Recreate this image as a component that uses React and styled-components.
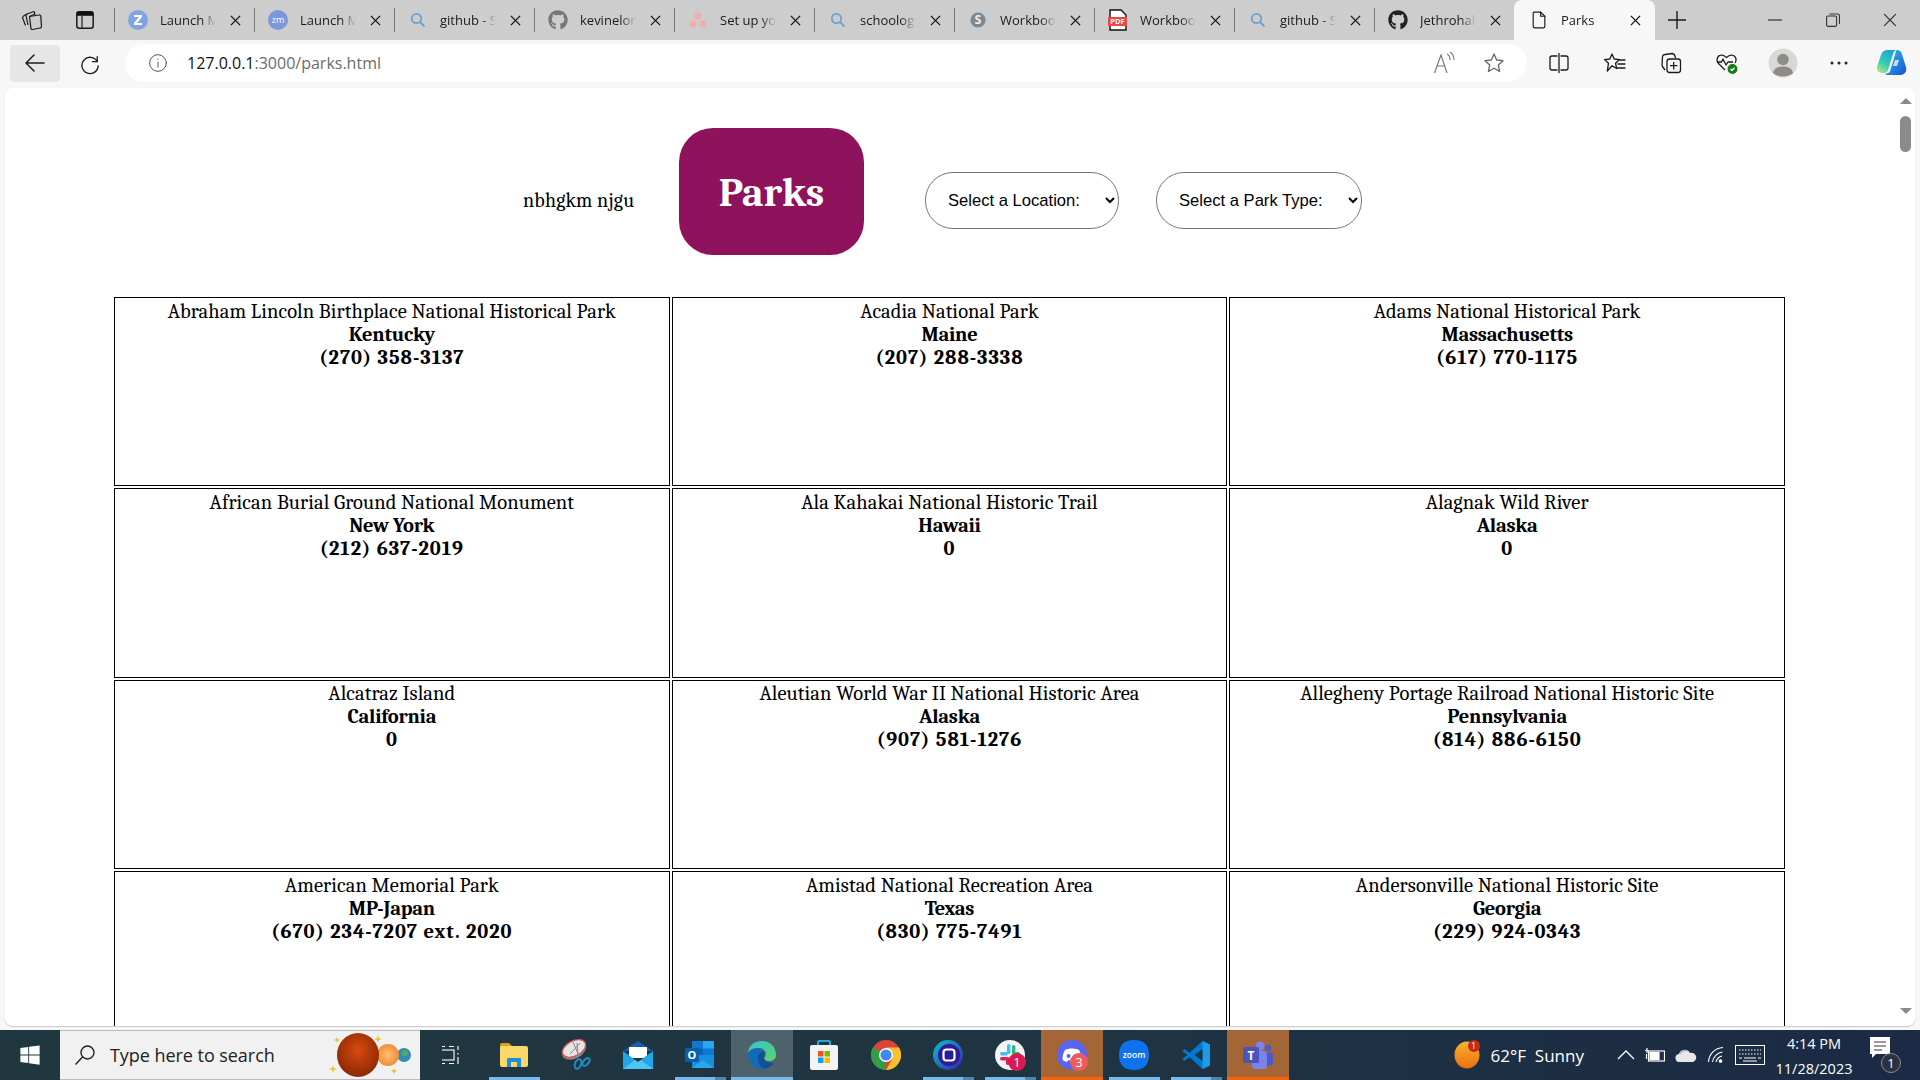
import React from "react";
import styled, { createGlobalStyle } from "styled-components";
import { FaGithub, FaWindows } from "react-icons/fa";

const Global = createGlobalStyle`
  html, body { margin: 0; padding: 0; width: 1920px; height: 1080px; overflow: hidden; background: #f7f7f7; }
  #root { width: 1920px; height: 1080px; }
  * { box-sizing: border-box; }
`;

const Screen = styled.div`
  width: 1920px; height: 1080px; display: flex; flex-direction: column;
  font-family: "Open Sans", "Noto Sans", sans-serif; color: #1b1b1b; overflow: hidden;
`;

/* ---------- tab strip ---------- */
const TabStrip = styled.div`
  height: 40px; flex: none; display: flex; align-items: stretch; background: #cdcdcd;
`;
const StripButton = styled.div`
  width: ${p => p.$w}px; margin-right: ${p => p.$mr || 0}px; flex: none; display: flex; align-items: center; justify-content: center;
`;
const Tab = styled.div`
  width: 140px; flex: none; position: relative; display: flex; align-items: center; padding-left: 13px; font-size: 13px;
  border-left: 1px solid #777; height: 24px; align-self: center;
`;
const ActiveTab = styled.div`
  width: 141px; flex: none; display: flex; align-items: center; padding-left: 15px; font-size: 13px;
  background: #f7f7f7; border-radius: 8px 8px 0 0; height: 40px;
`;
const TabIcon = styled.span`
  width: 20px; height: 20px; flex: none; display: flex; align-items: center; justify-content: center;
`;
const TabTitle = styled.span`
  width: ${p => p.$w || 62}px; margin-left: 12px; overflow: hidden; white-space: nowrap; flex: none;
  -webkit-mask-image: linear-gradient(to right, #000 66%, transparent 90%);
  mask-image: linear-gradient(to right, #000 66%, transparent 90%);
`;
const TabClose = styled.span`
  display: flex; margin-left: 6px; width: 14px; justify-content: center; flex: none;
`;
const WindowControls = styled.div`
  margin-left: auto; display: flex; align-items: center; padding-right: 1px;
`;
const WinBtn = styled.div`
  width: 57.5px; display: flex; justify-content: center; align-items: center;
`;

/* ---------- toolbar ---------- */
const Toolbar = styled.div`
  height: 48px; flex: none; display: flex; align-items: center; padding: 0 0 2px 10px; background: #f7f7f7;
`;
const BackButton = styled.div`
  width: 50px; height: 37px; background: #e6e6e6; border-radius: 4px; display: flex; align-items: center; justify-content: center;
`;
const ReloadButton = styled.div`
  width: 60px; padding-left: 1px; display: flex; align-items: center; justify-content: center;
`;
const AddressBar = styled.div`
  margin-left: 5px; width: 1402px; height: 38px; background: #fff; border-radius: 19px; display: flex; align-items: center; padding-left: 23px; padding-right: 21px;
`;
const UrlText = styled.span`
  margin-left: 19px; font-size: 16px; color: #6b6b6b; white-space: nowrap;
  b { font-weight: 400; color: #111; }
`;
const AddressActions = styled.div`
  margin-left: auto; display: flex; align-items: center; gap: 25px;
`;
const ToolGroup = styled.div`
  display: flex; margin-left: 4px;
`;
const ToolBtn = styled.div`
  width: ${p => p.$w || 56}px; display: flex; align-items: center; justify-content: center;
`;

/* ---------- page ---------- */
const Viewport = styled.div`
  flex: 1; min-height: 0; margin: 0 5px; background: #fff; border-radius: 8px; display: flex; overflow: hidden;
  box-shadow: 0 1px 1px rgba(0,0,0,.18);
`;
const Page = styled.main`
  flex: 1; min-width: 0; overflow: hidden; padding: 40px 0 0 109px;
  font-family: Cambria, "Liberation Serif", serif; color: #000;
`;
const Header = styled.header`
  display: flex; align-items: center; padding-left: 409px; margin-bottom: 25px;
`;
const NameLabel = styled.div`
  width: 111px; font-size: 20px; white-space: nowrap; letter-spacing: .2px;
`;
const Badge = styled.div`
  width: 185px; height: 127px; margin: 0 61px 17px 45px; padding-top: 2px; border-radius: 34px; background: #8e135c; color: #fff;
  display: flex; align-items: center; justify-content: center; font-size: 41px; font-weight: 700;
`;
const Select = styled.select`
  width: ${p => p.$w}px; height: 57px; margin-right: 37px; border: 1px solid #767676; border-radius: 28px; background: #fff;
  font-family: "Liberation Sans", Arial, sans-serif; font-size: 16.6px; color: #000; padding-left: 18px;
`;
const Grid = styled.div`
  display: grid; grid-template-columns: repeat(3, 555.67px); grid-auto-rows: 189.4px; gap: 2px;
`;
const Card = styled.article`
  border: 1px solid #000; text-align: center; padding-top: 1.5px; font-size: 20.5px; line-height: 23px;
`;
const ParkName = styled.div` letter-spacing: .08px; `;
const ParkState = styled.div` font-weight: 700; letter-spacing: -.25px; `;
const ParkPhone = styled.div` font-weight: 700; letter-spacing: .95px; `;

const Scrollbar = styled.div`
  width: 18px; flex: none; display: flex; flex-direction: column; align-items: center; padding: 10px 1px 0 0;
`;
const ArrowUp = styled.div`
  width: 0; height: 0; border-left: 6px solid transparent; border-right: 6px solid transparent; border-bottom: 6px solid #8b8b8b;
`;
const ArrowDown = styled(ArrowUp)`
  border-bottom: 0; border-top: 6px solid #8b8b8b; margin-top: auto; margin-bottom: 12px;
`;
const Thumb = styled.div`
  width: 11px; height: 36px; background: #8b8b8b; border-radius: 6px; margin-top: 12px;
`;

/* ---------- taskbar ---------- */
const Taskbar = styled.div`
  height: 50px; margin-top: 4px; flex: none; display: flex; align-items: stretch; color: #fff;
  background: linear-gradient(to right, #20373f 0%, #1f3442 55%, #1b2a45 100%);
`;
const StartButton = styled.div`
  width: 60px; display: flex; align-items: center; justify-content: center; flex: none;
`;
const SearchBox = styled.div`
  width: 360px; flex: none; background: #f1f1f1; border-top: 1px solid #bbb; border-bottom: 1px solid #bbb; display: flex; align-items: center; padding-left: 14px; color: #222; font-size: 18px; position: relative;
`;
const SearchText = styled.span` margin-left: 14px; letter-spacing: -.05px; `;
const SearchArt = styled.span` position: absolute; right: 6px; top: 1px; `;
const Apps = styled.div` display: flex; margin-left: 1px; `;
const AppItem = styled.div`
  width: 62px; display: flex; align-items: center; justify-content: center; position: relative;
  background: ${p => p.$state === "active" ? "#4d626a" : p.$state === "attention" ? "#a46636" : "transparent"};
  &::after {
    content: ""; position: absolute; bottom: 0; height: 3px;
    display: ${p => p.$state ? "block" : "none"};
    left: ${p => (p.$state === "active" || p.$state === "attention") ? 0 : 6}px;
    right: ${p => (p.$state === "active" || p.$state === "attention") ? 0 : 5}px;
    background: ${p => p.$state === "attention" ? "#f7630c" : p.$state === "stacked" ? "linear-gradient(to right, #76b9ed 40px, #4f86ad 40px)" : "#76b9ed"};
  }
`;
const Count = styled.span`
  position: absolute; left: 29px; top: 23px; width: 18px; height: 18px; border-radius: 50%;
  background: ${p => p.$c}; color: #fff; font-size: 13px; line-height: 18px; text-align: center; font-family: "Open Sans", sans-serif;
`;
const Tray = styled.div`
  margin-left: auto; display: flex; align-items: center;
`;
const Weather = styled.div`
  display: flex; align-items: center; font-size: 17px; white-space: pre; position: relative; margin-right: 33px;
`;
const WeatherText = styled.span` margin-left: 11px; `;
const WeatherBadge = styled.span`
  position: absolute; left: 14px; top: -1px; width: 12px; height: 12px; border-radius: 50%; background: #c42b1c; font-size: 9px; line-height: 12px; text-align: center; color: #fff;
`;
const TrayIcons = styled.div`
  display: flex; align-items: center; gap: 10px;
`;
const TrayIcon = styled.span` display: flex; width: ${p => p.$w}px; justify-content: center; `;
const Clock = styled.div`
  margin-left: 7px; width: 84px; text-align: center; font-size: 14.5px; line-height: 25px; white-space: nowrap; padding-top: 1px;
`;
const Notify = styled.div`
  margin-left: 14px; margin-right: 17px; width: 28px; height: 36px; position: relative;
`;
const NotifyCount = styled.span`
  position: absolute; right: -3px; bottom: 0; width: 20px; height: 20px; border-radius: 50%; background: #2a3342; border: 1px solid #8d8d8d; font-size: 13px; line-height: 18px; text-align: center;
`;
const ShowDesktop = styled.div` width: 5px; border-left: 1px solid #66717f; `;

/* ---------- icons ---------- */
const Line = ({ s = 20, w = 1.4, c = "#1b1b1b", children, vb = 24 }) => (
  <svg width={s} height={s} viewBox={`0 0 ${vb} ${vb}`} fill="none" stroke={c} strokeWidth={w} strokeLinecap="round" strokeLinejoin="round">{children}</svg>
);
const CloseX = ({ s = 11, c = "#111", w = 1.4 }) => (
  <svg width={s} height={s} viewBox="0 0 12 12" stroke={c} strokeWidth={w} fill="none"><path d="M1 1l10 10M11 1L1 11" /></svg>
);
const Dot = ({ bg, children }) => (
  <svg width="20" height="20" viewBox="0 0 20 20"><circle cx="10" cy="10" r="10" fill={bg} />{children}</svg>
);
const ZIcon = () => <Dot bg="#7fa3e4"><path d="M6 5h8v2l-5 6h5v2H6v-2l5-6H6z" fill="#fff" /></Dot>;
const ZmIcon = () => (
  <svg width="20" height="20" viewBox="0 0 20 20"><circle cx="10" cy="10" r="10" fill="#7d97dc" /><text x="10" y="13" textAnchor="middle" fontSize="9" fill="#fff" fontFamily="Open Sans">zm</text></svg>
);
const Magnifier = () => (
  <svg width="16" height="16" viewBox="0 0 16 16" fill="none" stroke="#6fa0cf" strokeWidth="1.8"><circle cx="6.5" cy="6.5" r="4.7" /><path d="M10 10l4.5 4.5" /></svg>
);
const AsanaDots = () => (
  <svg width="18" height="18" viewBox="0 0 18 18" fill="#eeb0ae"><circle cx="9" cy="5" r="3.6" /><circle cx="4" cy="13" r="3.6" /><circle cx="14" cy="13" r="3.6" /></svg>
);
const Schoology = () => (
  <svg width="20" height="20" viewBox="0 0 20 20"><circle cx="10" cy="10" r="9.5" fill="#b6d4e3" /><circle cx="10" cy="10" r="7.6" fill="#868686" /><text x="10" y="14.4" textAnchor="middle" fontSize="12.5" fontWeight="700" fill="#eee" fontFamily="Open Sans">S</text></svg>
);
const Pdf = () => (
  <svg width="20" height="22" viewBox="0 0 20 22"><path d="M2 1h11l5 5v15H2z" fill="#fff" stroke="#111" strokeWidth="1.4" /><rect x="0" y="8" width="19" height="9" rx="1" fill="#f04445" /><text x="9.5" y="15.4" textAnchor="middle" fontSize="7.5" fontWeight="700" fill="#fff" fontFamily="Open Sans">PDF</text></svg>
);
const PageIcon = () => (
  <Line s={22} w={1.4}><path d="M6 2.5h8l5 5v12a2 2 0 0 1-2 2H7a2 2 0 0 1-2-2v-15a2 2 0 0 1 1-2z" /><path d="M14 2.5v5h5" /></Line>
);
const Gh = ({ c = "#3a3a3a" }) => <FaGithub size={20} color={c} />;

const TABS = [
  { t: "Launch Meeting", i: <ZIcon /> },
  { t: "Launch Meeting", i: <ZmIcon /> },
  { t: "github - Search", i: <Magnifier /> },
  { t: "kevinelong", i: <Gh c="#777" /> },
  { t: "Set up your", i: <AsanaDots /> },
  { t: "schoology", i: <Magnifier /> },
  { t: "Workbook", i: <Schoology /> },
  { t: "Workbook", i: <Pdf /> },
  { t: "github - Search", i: <Magnifier /> },
  { t: "Jethrohall", i: <Gh c="#222" /> },
];

const Edge = () => (
  <svg width="30" height="30" viewBox="0 0 30 30">
    <defs>
      <linearGradient id="eg" x1="0" y1="0" x2="1" y2="1"><stop offset="0" stopColor="#30c5d2" /><stop offset="1" stopColor="#5ed36a" /></linearGradient>
    </defs>
    <path d="M1 14C1 6 7 1 15 1c8 0 14 6 14 14 0 4-3 6-7 6-3 0-5-1-5-3 0-1 2-1 2-4 0-3-4-6-9-6-5 0-9 3-9 6z" fill="url(#eg)" />
    <path d="M1 14c0 8 6 15 14 15 5 0 9-2 12-6-3 2-7 2-10 0-4-2-5-6-3-11 1-2 2-3 3-3-5-2-14 0-16 5z" fill="#0f6cbd" />
    <path d="M11 17c0-3 2-5 6-6 1 3 0 4 0 7 0 3 5 5 10 5-3 4-7 6-11 5-3-2-5-6-5-11z" fill="#124f96" />
  </svg>
);
const Folder = () => (
  <svg width="28" height="26" viewBox="0 0 28 26"><path d="M0 3a2 2 0 0 1 2-2h7l3 3v3H0z" fill="#dca21c" /><rect x="0" y="4" width="28" height="21" rx="2" fill="#fbd768" /><path d="M7 25v-8a1 1 0 0 1 1-1h12a1 1 0 0 1 1 1v8h-4v-5h-6v5z" fill="#1d8fe0" /></svg>
);
const Snip = () => (
  <svg width="30" height="32" viewBox="0 0 30 32">
    <ellipse cx="13" cy="11" rx="13" ry="8.500" transform="rotate(-28 13 11)" fill="#8a8a8a" />
    <ellipse cx="13" cy="9.500" rx="12.500" ry="7.500" transform="rotate(-28 13 9.500)" fill="#e8e4e4" stroke="#d9534f" strokeWidth="1.300" />
    <path d="M9 15L19 4M12 3l6 14M16 4l1 12" stroke="#8a8a8a" strokeWidth="1" fill="none" />
    <ellipse cx="17" cy="25" rx="3" ry="5" transform="rotate(20 17 25)" fill="none" stroke="#1d8fc8" strokeWidth="2" />
    <ellipse cx="25" cy="23" rx="4.500" ry="2.600" transform="rotate(-50 25 23)" fill="none" stroke="#1d8fc8" strokeWidth="2" />
  </svg>
);
const Mail = () => (
  <svg width="30" height="30" viewBox="0 0 30 30"><path d="M0 11L15 1l15 10z" fill="#0f5fb0" /><path d="M6 7h18v11H6z" fill="#fff" /><path d="M0 11l15 11 15-11v18H0z" fill="#1fa6e8" /><path d="M0 29l12-9 3 2 3-2 12 9z" fill="#50c4f5" /></svg>
);
const Outlook = () => (
  <svg width="30" height="30" viewBox="0 0 30 30"><rect x="7" y="1" width="22" height="15" fill="#0f78d4" /><rect x="18" y="1" width="11" height="7.500" fill="#28a8ea" /><rect x="7" y="8.500" width="11" height="7.500" fill="#0364b8" /><path d="M7 15h22v13H7z" fill="#1490df" /><path d="M7 28l11-8 11 8z" fill="#28a8ea" /><rect x="0" y="8" width="14" height="14" rx="1.500" fill="#0a5eb0" /><text x="7" y="19" textAnchor="middle" fontSize="11" fontWeight="700" fill="#fff" fontFamily="Open Sans">O</text></svg>
);
const Store = () => (
  <svg width="30" height="32" viewBox="0 0 30 32"><path d="M9 6V3a1 1 0 0 1 1-1h10a1 1 0 0 1 1 1v3" fill="none" stroke="#23a9d8" strokeWidth="2" /><rect x="1" y="6" width="28" height="25" rx="2" fill="#f3f3f3" /><rect x="9" y="12" width="5.500" height="5.500" fill="#f25022" /><rect x="15.500" y="12" width="5.500" height="5.500" fill="#7fba00" /><rect x="9" y="18.500" width="5.500" height="5.500" fill="#00a4ef" /><rect x="15.500" y="18.500" width="5.500" height="5.500" fill="#ffb900" /></svg>
);
const Chrome = () => (
  <svg width="30" height="30" viewBox="0 0 30 30"><circle cx="15" cy="15" r="15" fill="#db4437" /><path d="M15 15L2 22.500A15 15 0 0 0 15 30l0 0z" fill="#2f9e44" /><path d="M2 7.500A15 15 0 0 0 2 22.500 L9 19 15 15z" fill="#2f9e44" /><path d="M15 30A15 15 0 0 0 28 7.500H15l6.500 11z" fill="#fbc02d" /><circle cx="15" cy="15" r="7" fill="#fff" /><circle cx="15" cy="15" r="5.600" fill="#4285f4" /></svg>
);
const Opera = () => (
  <svg width="30" height="30" viewBox="0 0 30 30"><defs><linearGradient id="og" x1="0" y1="0" x2="1" y2="1"><stop offset="0" stopColor="#0bc4c4" /><stop offset="1" stopColor="#3a1fb0" /></linearGradient></defs><circle cx="15" cy="15" r="15" fill="url(#og)" /><circle cx="16" cy="15" r="11" fill="#2b1c9a" /><rect x="10.500" y="9.500" width="11" height="11" rx="3" fill="none" stroke="#fff" strokeWidth="2.200" /></svg>
);
const Slack = () => (
  <svg width="30" height="30" viewBox="0 0 30 30"><circle cx="15" cy="15" r="15" fill="#f4f4f4" /><rect x="12" y="4" width="3.400" height="10" rx="1.700" fill="#36c5f0" /><rect x="5" y="12" width="8" height="3.400" rx="1.700" fill="#36c5f0" /><rect x="17" y="5" width="3.400" height="9" rx="1.700" fill="#2eb67d" /><rect x="17" y="12" width="8" height="3.400" rx="1.700" fill="#2eb67d" /><rect x="5" y="17" width="8" height="3.400" rx="1.700" fill="#e01e5a" /><rect x="11" y="17" width="3.400" height="8" rx="1.700" fill="#e01e5a" /></svg>
);
const Discord = () => (
  <svg width="30" height="30" viewBox="0 0 30 30"><circle cx="15" cy="15" r="15" fill="#5865f2" /><path d="M8 10c4-2 10-2 14 0 2 3 2.600 7 2.400 10-1.600 1-3 1.600-4.400 2l-1-1.800c-2.600.6-5.400.6-8 0l-1 1.800c-1.400-.4-2.800-1-4.400-2C5.400 17 6 13 8 10z" fill="#fff" /><circle cx="11.500" cy="16" r="2" fill="#5865f2" /><circle cx="18.500" cy="16" r="2" fill="#5865f2" /></svg>
);
const Zoom = () => (
  <svg width="30" height="30" viewBox="0 0 30 30"><path d="M15 0c10 0 15 5 15 15s-5 15-15 15S0 25 0 15 5 0 15 0z" fill="#0e72ed" /><text x="15" y="18" textAnchor="middle" fontSize="8.500" fontWeight="600" fill="#fff" fontFamily="Open Sans">zoom</text></svg>
);
const VSCode = () => (
  <svg width="30" height="30" viewBox="0 0 30 30"><path d="M21.500 1L29 4.500v21L21.500 29 8.500 17l-5 4L1 19l5.500-4L1 11l2.500-2 5 4z" fill="#0078d4" /><path d="M21.500 1L29 4.500v21L21.500 29z" fill="#1c9be6" /><path d="M21.500 9l-8 6 8 6z" fill="#1f3441" /></svg>
);
const Teams = () => (
  <svg width="30" height="30" viewBox="0 0 30 30"><circle cx="17" cy="6" r="4.500" fill="#7b83eb" /><circle cx="25" cy="8" r="3.300" fill="#5059c9" /><rect x="21" y="12.500" width="9" height="13" rx="3" fill="#5059c9" /><rect x="9" y="11" width="15" height="18" rx="3" fill="#7b83eb" /><rect x="0" y="7" width="16" height="16" rx="1.500" fill="#4b53bc" /><text x="8" y="19.500" textAnchor="middle" fontSize="12" fontWeight="700" fill="#fff" fontFamily="Open Sans">T</text></svg>
);
const TaskView = () => (
  <svg width="20" height="20" viewBox="2 0 20 20" fill="none" stroke="#fff" strokeWidth="1.100"><rect x="1" y="5" width="13" height="10" /><path d="M1 1.500h4M9 1.500h5M1 18.500h4M9 18.500h5M18 1v4M18 8v1.500M18 12v7" /></svg>
);
const Copilot = () => (
  <svg width="32" height="28" viewBox="0 0 32 28">
    <defs>
      <linearGradient id="cp1" x1="0" y1="0" x2="1" y2="1"><stop offset="0" stopColor="#2cc4e6" /><stop offset="1" stopColor="#1a4fd8" /></linearGradient>
      <linearGradient id="cp2" x1=".7" y1="0" x2=".2" y2="1"><stop offset="0" stopColor="#1f9fe0" /><stop offset=".6" stopColor="#35cfb0" /><stop offset="1" stopColor="#a8e58c" /></linearGradient>
    </defs>
    <path d="M21 1c2.500 0 4 1.200 4.800 3.800L30 18c1.200 4.300-1.300 8-5.500 8H11c-1.500 0-2-.8-1-1.500 2.500 0 3.700-1 4.300-3L19 6c.6-3 1-5 2-5z" fill="url(#cp1)" />
    <path d="M12 1h8c-1.600.6-2.400 2-3 4l-5 16c-.6 2-2 3-4 3H6c-3.800 0-5.800-3-4.800-7L5 6c.9-3.400 3.500-5 7-5z" fill="url(#cp2)" />
    <path d="M19 11h4l-2 6h-4z" fill="#e8f6ff" opacity=".8" />
  </svg>
);

const PARKS = [
  ["Abraham Lincoln Birthplace National Historical Park", "Kentucky", "(270) 358-3137"],
  ["Acadia National Park", "Maine", "(207) 288-3338"],
  ["Adams National Historical Park", "Massachusetts", "(617) 770-1175"],
  ["African Burial Ground National Monument", "New York", "(212) 637-2019"],
  ["Ala Kahakai National Historic Trail", "Hawaii", "0"],
  ["Alagnak Wild River", "Alaska", "0"],
  ["Alcatraz Island", "California", "0"],
  ["Aleutian World War II National Historic Area", "Alaska", "(907) 581-1276"],
  ["Allegheny Portage Railroad National Historic Site", "Pennsylvania", "(814) 886-6150"],
  ["American Memorial Park", "MP-Japan", "(670) 234-7207 ext. 2020"],
  ["Amistad National Recreation Area", "Texas", "(830) 775-7491"],
  ["Andersonville National Historic Site", "Georgia", "(229) 924-0343"],
];

const APPS = [
  { i: <TaskView /> },
  { i: <Folder />, s: "running" },
  { i: <Snip /> },
  { i: <Mail /> },
  { i: <Outlook />, s: "stacked" },
  { i: <Edge />, s: "active" },
  { i: <Store /> },
  { i: <Chrome /> },
  { i: <Opera />, s: "stacked" },
  { i: <Slack />, s: "stacked", n: 1, c: "#d81b50" },
  { i: <Discord />, s: "attention", n: 3, c: "#f05a5a" },
  { i: <Zoom />, s: "running" },
  { i: <VSCode />, s: "stacked" },
  { i: <Teams />, s: "attention" },
];

export default function App() {
  return (
    <Screen>
      <Global />
      <TabStrip>
        <StripButton $w={64}>
          <svg width="22" height="22" viewBox="0 0 22 22" fill="none" stroke="#1b1b1b" strokeWidth="1.200" strokeLinejoin="round"><path d="M8.500 7.500l9.500-1.500a1.500 1.500 0 0 1 1.800 1.400l.7 10a1.500 1.500 0 0 1-1.400 1.600l-7.500 1.500a1.500 1.500 0 0 1-1.700-1.400L8.500 7.500z" /><path d="M8.500 7.500L14 5l-1-2.500L6 5 5 6.500 7 16" /><path d="M6 5L2.500 7 1.500 8.500l3 8" /></svg>
        </StripButton>
        <StripButton $w={41} $mr={9}>
          <svg width="18" height="18" viewBox="0 0 18 18"><rect x=".8" y=".8" width="16.400" height="16.400" rx="2.500" fill="none" stroke="#1b1b1b" strokeWidth="1.500" /><rect x=".8" y=".8" width="16.400" height="4" fill="#111" /><path d="M6 5v12" stroke="#1b1b1b" strokeWidth="1.200" /></svg>
        </StripButton>
        {TABS.map((tab, idx) => (
          <Tab key={idx}>
            <TabIcon>{tab.i}</TabIcon>
            <TabTitle>{tab.t}</TabTitle>
            <TabClose><CloseX /></TabClose>
          </Tab>
        ))}
        <ActiveTab>
          <TabIcon><PageIcon /></TabIcon>
          <TabTitle $w={61}>Parks</TabTitle>
          <TabClose><CloseX /></TabClose>
        </ActiveTab>
        <StripButton $w={44}>
          <svg width="18" height="18" viewBox="0 0 18 18" stroke="#1b1b1b" strokeWidth="1.400"><path d="M9 0v18M0 9h18" /></svg>
        </StripButton>
        <WindowControls>
          <WinBtn><svg width="14" height="2" viewBox="0 0 14 2"><path d="M0 1h14" stroke="#333" strokeWidth="1.200" /></svg></WinBtn>
          <WinBtn><svg width="14" height="14" viewBox="0 0 14 14" fill="none" stroke="#333" strokeWidth="1.100"><rect x=".6" y="3" width="10" height="10.400" rx="1.500" /><path d="M3.500 1h8a2 2 0 0 1 2 2v8" /></svg></WinBtn>
          <WinBtn><CloseX s={14} c="#333" w={1.100} /></WinBtn>
        </WindowControls>
      </TabStrip>

      <Toolbar>
        <BackButton>
          <Line s={24} w={1.500}><path d="M21 12H3M11 4l-8 8 8 8" /></Line>
        </BackButton>
        <ReloadButton>
          <Line s={23} w={1.400}><path d="M19 5v5h-5" /><path d="M19 10a8.500 8.500 0 1 0 1 4.500" /></Line>
        </ReloadButton>
        <AddressBar>
          <Line s={20} w={1.200} c="#555"><circle cx="12" cy="12" r="10" /><path d="M12 11v6M12 7.500v.6" /></Line>
          <UrlText><b>127.0.0.1</b>:3000/parks.html</UrlText>
          <AddressActions>
            <svg width="24" height="24" viewBox="0 0 24 24" fill="none" stroke="#777" strokeWidth="1.200"><path d="M1.500 22L8 4l6 18M4 15h8" /><path d="M14 3c2 1 3 3 3 6M17 1c2.500 1.500 4 4.500 4 8" /></svg>
            <Line s={24} w={1.300} c="#666"><path d="M12 3l2.700 6 6.300.700-4.700 4.300 1.300 6.500L12 17.200 6.400 20.500l1.300-6.500L3 9.700 9.300 9z" /></Line>
          </AddressActions>
        </AddressBar>
        <ToolGroup>
          <ToolBtn>
            <svg width="20" height="20" viewBox="0 0 20 20" fill="none" stroke="#1b1b1b" strokeWidth="1.300"><path d="M8.500 3H3a2 2 0 0 0-2 2v10a2 2 0 0 0 2 2h5.500M11.500 3H17a2 2 0 0 1 2 2v10a2 2 0 0 1-2 2h-5.500M10 0v20" /></svg>
          </ToolBtn>
          <ToolBtn>
            <svg width="22" height="22" viewBox="0 0 22 22" fill="none" stroke="#1b1b1b" strokeWidth="1.300" strokeLinejoin="round" strokeLinecap="round"><path d="M8 2l2.200 5 5.300.6-4 3.600 1.200 5.300L8 13.800 3.300 19l1.200-7.800-4-3.600 5.300-.6z" /><path d="M15 8h6M14 12h7M13 16h8" /></svg>
          </ToolBtn>
          <ToolBtn>
            <svg width="22" height="22" viewBox="0 0 22 22" fill="none" stroke="#1b1b1b" strokeWidth="1.300" strokeLinejoin="round"><path d="M5 18l-2.500-3.500a2 2 0 0 1-.5-1.500l.5-8A2.500 2.500 0 0 1 5 2.500l7-1c1.500 0 2.500 1 3 2.500l.5 2" /><rect x="7" y="7" width="13.500" height="13.500" rx="2.500" /><path d="M13.700 10v7.500M10 13.700h7.500" /></svg>
          </ToolBtn>
          <ToolBtn>
            <svg width="22" height="22" viewBox="0 0 22 22" fill="none" stroke="#1b1b1b" strokeWidth="1.300" strokeLinejoin="round"><path d="M9 18L2.500 11.500C0 9 1 4 4.500 3.200 7 2.500 9 4 10.500 5.500 12 4 14 2.500 16.500 3.200 20 4 21 8 19 11" /><path d="M1 10h4.500l1.500-3 3 6 2-3h5" /><circle cx="16.500" cy="17" r="4.300" fill="#107c10" stroke="#107c10" /><path d="M14.500 17l1.500 1.500 2.500-2.700" stroke="#fff" /></svg>
          </ToolBtn>
          <ToolBtn>
            <svg width="30" height="30" viewBox="0 0 30 30"><circle cx="15" cy="15" r="14.500" fill="#d8d8d6" /><circle cx="15" cy="11.500" r="5.800" fill="#8f8b88" /><path d="M5 25c1-5 5-6.500 10-6.500s9 1.500 10 6.500c-5 4.500-15 4.500-20 0z" fill="#8f8b88" /></svg>
          </ToolBtn>
          <ToolBtn>
            <svg width="18" height="4" viewBox="0 0 18 4" fill="#222"><circle cx="2" cy="2" r="1.500" /><circle cx="9" cy="2" r="1.500" /><circle cx="16" cy="2" r="1.500" /></svg>
          </ToolBtn>
          <ToolBtn $w={50}>
            <Copilot />
          </ToolBtn>
        </ToolGroup>
      </Toolbar>

      <Viewport>
        <Page>
          <Header>
            <NameLabel>nbhgkm njgu</NameLabel>
            <Badge>Parks</Badge>
            <Select $w={194}><option>Select a Location:</option></Select>
            <Select $w={206}><option>Select a Park Type:</option></Select>
          </Header>
          <Grid>
            {PARKS.map(([name, state, phone]) => (
              <Card key={name}>
                <ParkName>{name}</ParkName>
                <ParkState>{state}</ParkState>
                <ParkPhone>{phone}</ParkPhone>
              </Card>
            ))}
          </Grid>
        </Page>
        <Scrollbar>
          <ArrowUp />
          <Thumb />
          <ArrowDown />
        </Scrollbar>
      </Viewport>

      <Taskbar>
        <StartButton><FaWindows size={22} color="#fff" /></StartButton>
        <SearchBox>
          <svg width="22" height="22" viewBox="0 0 22 22" fill="none" stroke="#222" strokeWidth="1.400"><circle cx="13.500" cy="8.500" r="6.500" /><path d="M8.500 13L1.500 20.500" /></svg>
          <SearchText>Type here to search</SearchText>
          <SearchArt>
            <svg width="86" height="46" viewBox="0 0 86 46">
              <defs>
                <radialGradient id="mars" cx=".5" cy=".4" r=".7"><stop offset="0" stopColor="#d94a10" /><stop offset="1" stopColor="#7d2200" /></radialGradient>
                <radialGradient id="ven" cx=".5" cy=".5" r=".7"><stop offset="0" stopColor="#ffc070" /><stop offset="1" stopColor="#e87a20" /></radialGradient>
              </defs>
              <circle cx="76" cy="23" r="7" fill="#2e8fb0" />
              <circle cx="77" cy="21" r="3" fill="#58a868" />
              <circle cx="60" cy="23" r="11" fill="url(#ven)" />
              <ellipse cx="30" cy="23" rx="21" ry="22" fill="url(#mars)" />
              <path d="M9 5l1 2 2 1-2 1-1 2-1-2-2-1 2-1z M50 3l1 3 3 1-3 1-1 3-1-3-3-1 3-1z M5 33l1 3 3 1-3 1-1 3-1-3-3-1 3-1z M66 36l1 2 2 1-2 1-1 2-1-2-2-1 2-1z" fill="#f1c232" />
            </svg>
          </SearchArt>
        </SearchBox>
        <Apps>
          {APPS.map((a, idx) => (
            <AppItem key={idx} $state={a.s}>
              {a.i}
              {a.n ? <Count $c={a.c}>{a.n}</Count> : null}
            </AppItem>
          ))}
        </Apps>
        <Tray>
          <Weather>
            <svg width="26" height="28" viewBox="0 0 26 28"><defs><linearGradient id="sun" x1="0" y1="0" x2="0" y2="1"><stop offset="0" stopColor="#f7b52a" /><stop offset="1" stopColor="#ef6c12" /></linearGradient></defs><ellipse cx="13" cy="14" rx="12.500" ry="13.500" fill="url(#sun)" /></svg>
            <WeatherBadge>1</WeatherBadge>
            <WeatherText>62°F  Sunny</WeatherText>
          </Weather>
          <TrayIcons>
            <TrayIcon $w={18}><svg width="18" height="10" viewBox="0 0 18 10" fill="none" stroke="#fff" strokeWidth="1.300"><path d="M1 9l8-8 8 8" /></svg></TrayIcon>
            <TrayIcon $w={20}><svg width="20" height="16" viewBox="0 0 20 16" fill="none" stroke="#fff" strokeWidth="1.200"><rect x="3.500" y="4" width="16" height="10" /><rect x="5" y="5.500" width="9" height="7" fill="#fff" /><path d="M2 1v5M0 3.500h3.500M1.500 7v5" /></svg></TrayIcon>
            <TrayIcon $w={22}><svg width="22" height="16" viewBox="0 0 22 16"><path d="M5 15a4 4 0 0 1-1-8 6 6 0 0 1 11-1 4.500 4.500 0 0 1 3 9z" fill="#e8e8e8" /><path d="M5 8a6 6 0 0 1 9-3 5 5 0 0 0-9 3z" fill="#9aa3ad" /></svg></TrayIcon>
            <TrayIcon $w={18}><svg width="18" height="18" viewBox="0 0 18 18" fill="none" stroke="#fff" strokeWidth="1.100"><path d="M1.500 16C2 8 8 2 16 1.500M5.500 16c.4-5 5-9.500 10-10M9 16c.3-2.500 3-5.500 6-6" /><circle cx="13.500" cy="15" r="1.300" fill="#fff" /></svg></TrayIcon>
            <TrayIcon $w={30}><svg width="30" height="20" viewBox="0 0 30 20" fill="none" stroke="#fff" strokeWidth="1"><rect x=".5" y=".5" width="29" height="19" /><path d="M4 5h22M4 9h22" strokeDasharray="1.500 1.500" /><path d="M4 13h3M9 13h12M23 13h3M8 16h14" /></svg></TrayIcon>
          </TrayIcons>
          <Clock>
            <div>4:14 PM</div>
            <div>11/28/2023</div>
          </Clock>
          <Notify>
            <svg width="20" height="22" viewBox="0 0 20 22" style={{ display: "block" }}><path d="M0 0h20v17H6l-4 4v-4H0z" fill="#fff" /><path d="M4 5h12M4 9h12M4 13h8" stroke="#333" strokeWidth="1" /></svg>
            <NotifyCount>1</NotifyCount>
          </Notify>
          <ShowDesktop />
        </Tray>
      </Taskbar>
    </Screen>
  );
}
